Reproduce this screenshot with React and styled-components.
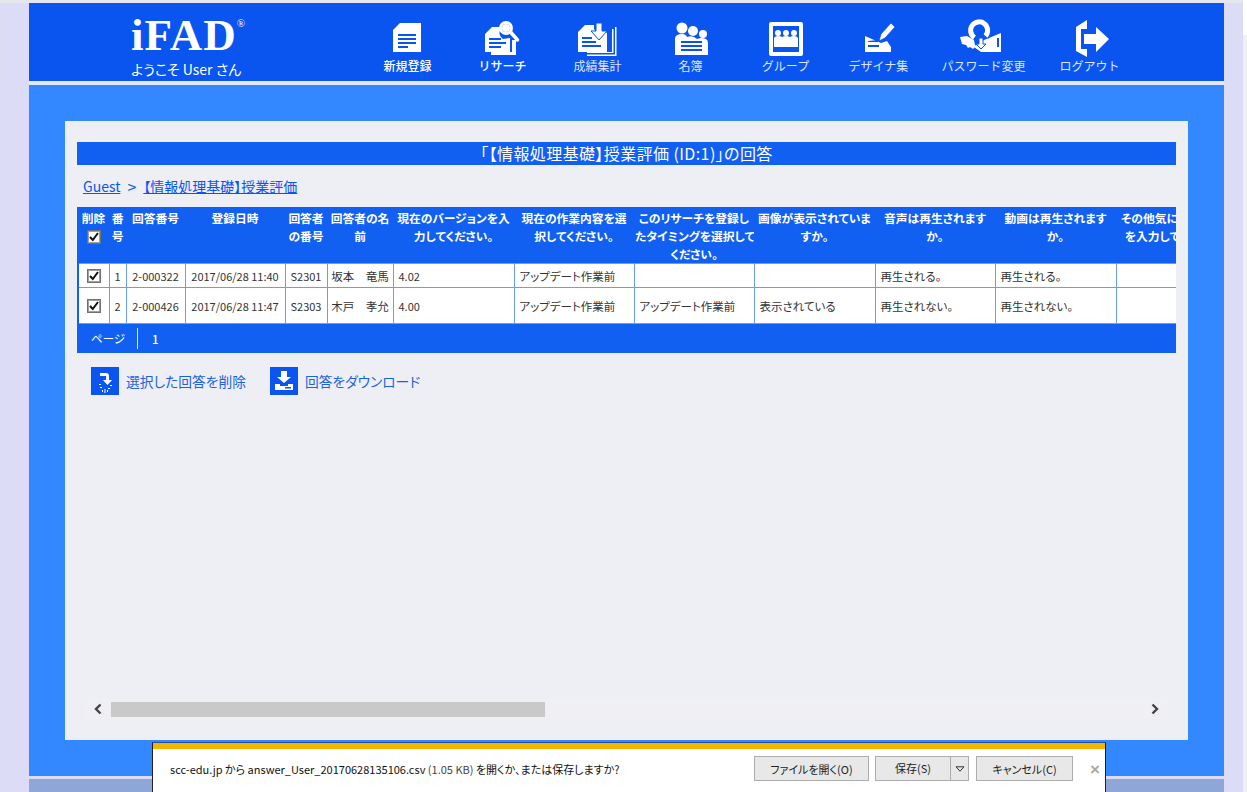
import React from "react"
import styled, { createGlobalStyle } from "styled-components"

const JP = `"Noto Sans CJK JP", "Noto Sans", sans-serif`

const navItems = [
  { label: "新規登録", Icon: NewIcon },
  { label: "リサーチ", Icon: ResearchIcon },
  { label: "成績集計", Icon: ScoreIcon, dim: true },
  { label: "名簿", Icon: RosterIcon, dim: true },
  { label: "グループ", Icon: GroupIcon, dim: true },
  { label: "デザイナ集", Icon: DesignIcon, dim: true },
  { label: "パスワード変更", Icon: PasswordIcon, dim: true },
  { label: "ログアウト", Icon: LogoutIcon, dim: true },
]

const columns = [31, 17, 59, 100, 42, 66, 121, 120, 120, 121, 120, 121, 120]

const headers = [
  null,
  ["番", "号"],
  ["回答番号"],
  ["登録日時"],
  ["回答者", "の番号"],
  ["回答者の名", "前"],
  ["現在のバージョンを入", "力してください。"],
  ["現在の作業内容を選", "択してください。"],
  ["このリサーチを登録し", "たタイミングを選択して", "ください。"],
  ["画像が表示されていま", "すか。"],
  ["音声は再生されます", "か。"],
  ["動画は再生されます", "か。"],
  ["その他気になることを", "を入力してください。"],
]

const rows = [
  {
    no: "1", id: "2-000322", date: "2017/06/28 11:40", code: "S2301", name: "坂本　竜馬",
    version: "4.02", work: "アップデート作業前", timing: "", image: "", sound: "再生される。", movie: "再生される。",
  },
  {
    no: "2", id: "2-000426", date: "2017/06/28 11:47", code: "S2303", name: "木戸　孝允",
    version: "4.00", work: "アップデート作業前", timing: "アップデート作業前", image: "表示されている", sound: "再生されない。", movie: "再生されない。",
  },
]

function NavSvg({ children }) {
  return <NavGlyph viewBox="0 0 44 38" width="44" height="38" fill="#fff">{children}</NavGlyph>
}

function NewIcon() {
  return (
    <NavSvg>
      <path d="M14 3h21v29H7V10Z" />
      <path d="M12 14h18v2H12zM12 18h18v2H12zM12 22h18v2H12zM12 26h10v2H12z" fill="#0a55f0" />
    </NavSvg>
  )
}

function ResearchIcon() {
  return (
    <NavSvg>
      <path d="M31 20h4v15H10v-3h21Z" />
      <path d="M11 7h9l-1 3a8 8 0 0 0 3 9l7-1v14H4V14Z" />
      <path d="M8 18h12v2H8zM8 22h17v2H8zM8 26h12v2H8z" fill="#0a55f0" />
      <circle cx="25" cy="8" r="5.5" fill="#0a55f0" stroke="#fff" strokeWidth="3" />
      <circle cx="25" cy="8" r="4" />
      <path d="m29.500 12 7 8" stroke="#fff" strokeWidth="3.500" strokeLinecap="round" />
    </NavSvg>
  )
}

function ScoreIcon() {
  return (
    <NavSvg>
      <path d="M36 9h1.500v24H36zM39 7h1.500v29H11v-1.500h28zM11 33h25v-1H11z" />
      <path d="M9 5h9v4l5 8 5-6 3 2v19H2V12Z" />
      <path d="M6 17h10v2H6zM6 21h14v2H6zM6 25h19v2H6z" fill="#0a55f0" />
      <path d="M20 3h6v8h5l-8 9-8-9h5Z" stroke="#0a55f0" />
    </NavSvg>
  )
}

function RosterIcon() {
  return (
    <NavSvg>
      <circle cx="13" cy="8" r="5.500" />
      <circle cx="24" cy="11" r="5" />
      <circle cx="34" cy="14" r="4" />
      <path d="M6 35V18q1-4 7-4 4 0 5 3 6-2 10 2 5-2 9 0 2 1 2 4v12Z" />
      <path d="M12 21h21v2H12zM12 25h21v2H12zM12 29h21v2H12z" fill="#0a55f0" />
    </NavSvg>
  )
}

function GroupIcon() {
  return (
    <NavSvg>
      <rect x="5" y="2" width="34" height="34" rx="2" />
      <rect x="9" y="6" width="26" height="26" fill="#0a55f0" />
      <circle cx="14" cy="13" r="3" />
      <circle cx="22" cy="13" r="3" />
      <circle cx="30" cy="13" r="3" />
      <path d="M10 27V18q1-2 4-2 3 0 4 1 2-1 4-1t4 1q1-1 4-1 3 0 4 2v9Z" />
    </NavSvg>
  )
}

function DesignIcon() {
  return (
    <NavSvg>
      <path d="M8 16v16h26v-5l-4-6-6 2Z" />
      <path d="M11 21l10-1v2H11zM11 25h11v2H11z" fill="#0a55f0" />
      <path d="M34 3l4 4-10 11-6 3 2-7Z" stroke="#0a55f0" strokeWidth=".8" />
    </NavSvg>
  )
}

function PasswordIcon() {
  return (
    <NavSvg>
      <path d="M22 20 39 13v19H19l-7-5Z" />
      <path d="M35 18h2v9h-2z" fill="#0a55f0" />
      <path d="M12.500 17.500A8.500 8.500 0 1 1 23.500 16" fill="none" stroke="#0a55f0" strokeWidth="8" />
      <path d="M12.500 17.500A8.500 8.500 0 1 1 23.500 16" fill="none" stroke="#fff" strokeWidth="5" />
      <path d="M-2 17l7-1 7 4 1 5 5 3-3 1-2-2-2 2-3-2-2 1-2-3-4-1Z" />
      <path d="M17 18h4v6h3l-5 5-5-5h3Z" stroke="#0a55f0" />
    </NavSvg>
  )
}

function LogoutIcon() {
  return (
    <NavSvg>
      <path d="M8 7 19 0v9h-6v20h6v8L8 31Z" />
      <path d="M16 14h12V7l13 12-13 13v-8H16Z" />
    </NavSvg>
  )
}

function DeleteIcon() {
  return (
    <svg viewBox="0 0 28 28" width="28" height="28" fill="#fff">
      <path d="M9 6h6q3 0 3 3v4h3l-4.500 5-4.500-5h3V9H9Z" />
      <path d="M9 20h2v1H9zM17 21h2v1h-2zM11 23h1v2h-1zM16 23h1v2h-1zM13.500 22h1v4h-1zM8 17h2v1H8zM19 18h2v1h-2z" />
    </svg>
  )
}

function DownloadIcon() {
  return (
    <svg viewBox="0 0 28 28" width="28" height="28" fill="#fff">
      <path d="M11 4h6v6h4l-7 6-7-6h4Z" />
      <path d="M5 17h5v2h8v-2h5v6H5Z" />
      <path d="M15 20h6v1.500h-6z" fill="#0a55f0" />
    </svg>
  )
}

function Check() {
  return (
    <CheckBox>
      <svg viewBox="0 0 12 12" width="12" height="12"><path d="M2 6 4.800 9 10 2" fill="none" stroke="#111" strokeWidth="2" /></svg>
    </CheckBox>
  )
}

const App = () => {
  return (
    <Page>
      <GlobalStyle />
      <Gutter />
      <Center>
        <Header>
          <Brand>
            <Logo>iFAD<sup>®</sup></Logo>
            <Welcome>ようこそ User さん</Welcome>
          </Brand>
          <Nav>
            {navItems.map(({ label, Icon, dim }) => (
              <NavItem key={label} $dim={dim}>
                <Icon />
                <span>{label}</span>
              </NavItem>
            ))}
          </Nav>
        </Header>
        <Main>
          <Panel>
            <Title>「【情報処理基礎】授業評価 (ID:1)」の回答</Title>
            <Crumbs>
              <a href="#guest">Guest</a>
              <span>&gt;</span>
              <a href="#research">【情報処理基礎】授業評価</a>
            </Crumbs>
            <TableWrap>
              <Table>
                <colgroup>
                  {columns.map((w, i) => <col key={i} width={w} />)}
                </colgroup>
                <thead>
                  <tr>
                    <Th $tight>削除<Check /></Th>
                    {headers.slice(1).map((lines, i) => (
                      <Th key={i} $tight={i < 5}>
                        {lines.map((line) => <div key={line}>{line}</div>)}
                      </Th>
                    ))}
                  </tr>
                </thead>
                <tbody>
                  {rows.map((row, i) => (
                    <Row key={row.id} $tall={i === 1}>
                      <Td $center><Check /></Td>
                      <Td $center $digits>{row.no}</Td>
                      <Td $center $digits>{row.id}</Td>
                      <Td $center $digits>{row.date}</Td>
                      <Td $center $digits>{row.code}</Td>
                      <Td $center>{row.name}</Td>
                      <Td $digits>{row.version}</Td>
                      <Td>{row.work}</Td>
                      <Td>{row.timing}</Td>
                      <Td>{row.image}</Td>
                      <Td>{row.sound}</Td>
                      <Td>{row.movie}</Td>
                      <Td />
                    </Row>
                  ))}
                </tbody>
              </Table>
              <Pager>
                <PagerLabel>ページ</PagerLabel>
                <PagerNumber>1</PagerNumber>
              </Pager>
            </TableWrap>
            <Actions>
              <Action href="#delete"><ActionIcon><DeleteIcon /></ActionIcon>選択した回答を削除</Action>
              <Action href="#download"><ActionIcon><DownloadIcon /></ActionIcon>回答をダウンロード</Action>
            </Actions>
            <ScrollBar>
              <ScrollArrow>
                <svg width="10" height="12" viewBox="0 0 10 12"><path d="M7.5 1.5 3 6l4.5 4.5" fill="none" stroke="#444" strokeWidth="2.4" /></svg>
              </ScrollArrow>
              <ScrollThumb />
              <ScrollArrow>
                <svg width="10" height="12" viewBox="0 0 10 12"><path d="M2.5 1.5 7 6l-4.5 4.5" fill="none" stroke="#444" strokeWidth="2.4" /></svg>
              </ScrollArrow>
            </ScrollBar>
          </Panel>
        </Main>
        <BottomStrip />
      </Center>
      <RightGutter />
      <BrowserEdge />
      <DownloadBar>
        <DownloadText>scc-edu.jp から answer_User_20170628135106.csv <em>(1.05 KB)</em> を開くか、または保存しますか?</DownloadText>
        <BarButton $width={115}>ファイルを開く(O)</BarButton>
        <SplitButton>
          <span>保存(S)</span>
          <i><svg width="10" height="6" viewBox="0 0 10 6"><path d="M1 .8h8L5 5.2Z" fill="none" stroke="#333" /></svg></i>
        </SplitButton>
        <BarButton $width={97}>キャンセル(C)</BarButton>
        <CloseMark>×</CloseMark>
      </DownloadBar>
    </Page>
  )
}

const GlobalStyle = createGlobalStyle`
  html, body {
    margin: 0;
    padding: 0;
    height: 100%;
    overflow: hidden;
  }
  body {
    background: #dddcf6;
    font-family: ${JP};
    font-feature-settings: "palt";
  }
`

const Page = styled.div`
  position: relative;
  display: flex;
  width: 1247px;
  height: 792px;
  overflow: hidden;
  box-sizing: border-box;
  padding-top: 3px;
  background: linear-gradient(#e6e6ee 3px, #dddcf6 3px);
`

const Gutter = styled.div`
  width: 29px;
  flex: none;
`

const RightGutter = styled.div`
  width: 19px;
  flex: none;
`

const BrowserEdge = styled.div`
  width: 4px;
  flex: none;
  margin-top: -3px;
  background: linear-gradient(#fff 35px, #f0f0f0 35px);
`

const Center = styled.div`
  width: 1195px;
  flex: none;
  display: flex;
  flex-direction: column;
`

const Header = styled.header`
  height: 78px;
  flex: none;
  display: flex;
  background: #0a55f0;
  padding-left: 102px;
  box-sizing: border-box;
`

const Brand = styled.div`
  width: 229px;
  flex: none;
  color: #fff;
`

const Logo = styled.div`
  font-family: "Liberation Serif", serif;
  font-weight: bold;
  font-size: 45px;
  line-height: 36px;
  margin-top: 14px;
  letter-spacing: 1px;

  sup {
    font-size: 11px;
    font-weight: normal;
    line-height: 0;
    vertical-align: 23px;
    letter-spacing: 0;
  }
`

const Welcome = styled.div`
  font-size: 14px;
  line-height: 16px;
  margin-top: 8px;
  white-space: nowrap;
`

const Nav = styled.nav`
  display: grid;
  grid-template-columns: 95px 95px 95px 91px 99px 87px 123px 89px;
  height: 100%;
`

const NavItem = styled.a`
  display: flex;
  flex-direction: column;
  align-items: center;
  padding-top: 17px;
  color: ${(p) => (p.$dim ? "#dbe6fd" : "#fff")};
  font-size: 12px;
  font-feature-settings: normal;
  font-weight: ${(p) => (p.$dim ? 400 : 500)};
  line-height: 16px;
  white-space: nowrap;
`

const NavGlyph = styled.svg`
  display: block;
  overflow: visible;
  flex: none;
`

const Main = styled.main`
  flex: none;
  height: 691px;
  margin-top: 4px;
  box-sizing: border-box;
  padding: 36px;
  background: #3388ff;
  box-shadow: 0 -4px 0 #e3e8fa;
`

const Panel = styled.section`
  height: 619px;
  box-sizing: border-box;
  padding: 21px 12px 21px;
  display: flex;
  flex-direction: column;
  background: #eeeef5;
`

const Title = styled.h1`
  margin: 0;
  height: 23px;
  line-height: 22px;
  background: #1160f2;
  color: #fff;
  font-size: 16px;
  font-weight: 400;
  letter-spacing: 0.4px;
  text-align: center;
`

const Crumbs = styled.nav`
  height: 42px;
  flex: none;
  display: flex;
  align-items: center;
  gap: 7px;
  padding-left: 6px;
  color: #1a62e0;
  font-size: 14px;

  a {
    color: #0a55f0;
    text-decoration: underline;
  }

  span {
    font-size: 16px;
  }
`

const TableWrap = styled.div`
  flex: none;
  overflow: hidden;
  background: #1160f2;
`

const Table = styled.table`
  width: 1158px;
  table-layout: fixed;
  border-collapse: collapse;
`

const CheckBox = styled.span`
  display: block;
  width: 14px;
  height: 14px;
  box-sizing: border-box;
  margin: 0 auto;
  border: 1px solid #707070;
  outline: 1px solid #a0a0a0;
  outline-offset: -2px;
  background: #fff;

  svg {
    display: block;
  }
`

const Th = styled.th`
  height: 56px;
  padding: 2px ${(p) => (p.$tight ? 0 : "1px")} 0;
  box-sizing: border-box;
  vertical-align: top;
  color: #fff;
  font-size: 11.750px;
  font-weight: 700;
  line-height: 18px;
  white-space: nowrap;
  overflow: hidden;

  ${CheckBox} {
    margin-top: 3px;
  }
`

const Row = styled.tr`
  height: ${(p) => (p.$tall ? "36px" : "24px")};
`

const Td = styled.td`
  padding: 0 ${(p) => (p.$center ? 0 : "5px")};
  box-sizing: border-box;
  background: #fff;
  border: 1px solid #6a9cf2;
  color: #333;
  font-size: ${(p) => (p.$digits ? "11px" : "11.500px")};
  text-align: ${(p) => (p.$center ? "center" : "left")};
  white-space: nowrap;
  overflow: hidden;

  &:first-child {
    border-left: 2px solid #1160f2;
  }
`

const Pager = styled.div`
  height: 29px;
  display: flex;
  align-items: center;
  color: #fff;
  font-size: 11.500px;
`

const PagerLabel = styled.span`
  width: 61px;
  height: 21px;
  line-height: 21px;
  box-sizing: border-box;
  padding-left: 14px;
  border-right: 1px solid #dbe6fd;
`

const PagerNumber = styled.span`
  margin-left: 14px;
  font-weight: 500;
`

const Actions = styled.div`
  display: flex;
  gap: 24px;
  margin-top: 14px;
  padding-left: 14px;
`

const Action = styled.a`
  display: flex;
  align-items: center;
  gap: 7px;
  height: 28px;
  color: #1a62e0;
  font-size: 13.750px;
  text-decoration: none;
  white-space: nowrap;
`

const ActionIcon = styled.span`
  display: block;
  width: 28px;
  height: 28px;
  background: #0a55f0;
`

const ScrollBar = styled.div`
  margin-top: auto;
  height: 20px;
  display: flex;
  align-items: center;
  margin-left: 8px;
  margin-right: 8px;
  background: #f0f0f4;
`

const ScrollArrow = styled.span`
  width: 26px;
  flex: none;
  display: flex;
  justify-content: center;
`

const ScrollThumb = styled.div`
  width: 434px;
  height: 15px;
  background: #c9c9c9;
  margin-right: auto;
`

const BottomStrip = styled.div`
  flex: 1;
  margin-top: 3px;
  background: #8fa7d8;
`

const DownloadBar = styled.aside`
  position: absolute;
  left: 152px;
  top: 742px;
  width: 954px;
  height: 60px;
  box-sizing: border-box;
  border: 1px solid #222;
  border-top: 1px solid #1b4fa8;
  background: #fff;
  display: flex;
  align-items: flex-start;
  padding: 13px 0 0 17px;

  &::before {
    content: "";
    position: absolute;
    left: 0;
    right: 0;
    top: 0;
    height: 6px;
    background: #f5b400;
  }
`

const DownloadText = styled.p`
  margin: 0;
  width: 584px;
  flex: none;
  color: #111;
  font-size: 11px;
  line-height: 26px;
  white-space: nowrap;

  em {
    font-style: normal;
    color: #444;
  }
`

const BarButton = styled.button`
  width: ${(p) => p.$width}px;
  height: 25px;
  margin-right: 6px;
  padding: 0;
  border: 1px solid #adadad;
  background: #e8e8e8;
  color: #222;
  font-family: ${JP};
  font-feature-settings: "palt";
  font-size: 11px;
`

const SplitButton = styled.div`
  width: 94px;
  height: 25px;
  margin-right: 7px;
  box-sizing: border-box;
  display: flex;
  border: 1px solid #adadad;
  background: #e8e8e8;
  color: #222;
  font-size: 11px;
  line-height: 23px;

  span {
    flex: 1;
    text-align: center;
  }

  i {
    width: 17px;
    border-left: 1px solid #adadad;
    display: flex;
    align-items: center;
    justify-content: center;
  }
`

const CloseMark = styled.span`
  margin-left: 11px;
  color: #a8a8a8;
  font-family: "Liberation Sans", sans-serif;
  font-size: 17px;
  font-weight: 700;
  line-height: 27px;
`

export default App
